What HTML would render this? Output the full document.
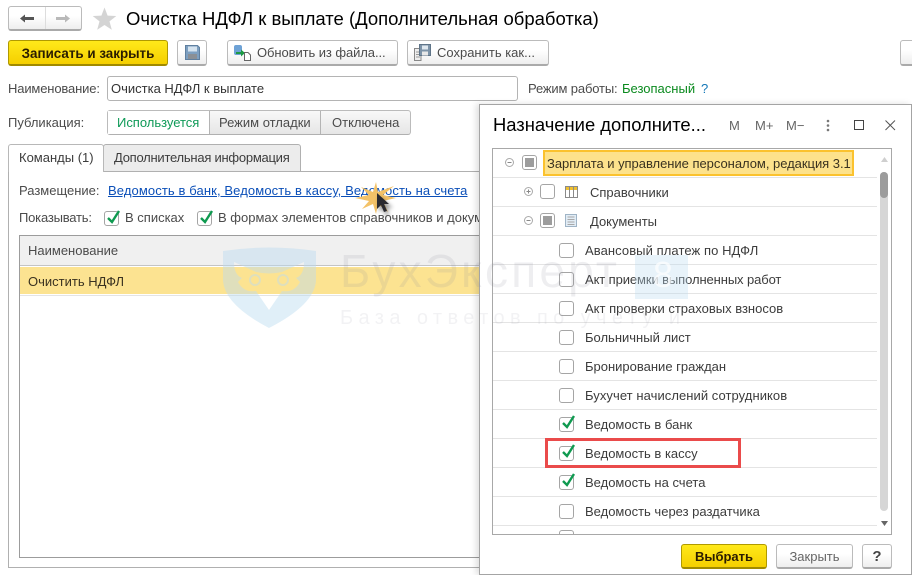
<!DOCTYPE html>
<html><head><meta charset="utf-8">
<style>
html,body{margin:0;padding:0;background:#fff}
#p{position:relative;width:912px;height:575px;overflow:hidden;background:#fff;font:13px/16px "Liberation Sans",sans-serif;color:#4b4b4b}
#p div,#p svg{position:absolute}
.t{white-space:nowrap}
.btn{box-sizing:border-box;border:1px solid #bbb;border-bottom:2px solid #aaa;border-radius:3px;background:linear-gradient(#fff 40%,#eee)}
.y{box-sizing:border-box;border:1px solid #b09a00;border-bottom:2px solid #a08a00;border-radius:3px;background:linear-gradient(#ffe91a,#f5cf00);color:#2a1c00;font-weight:bold;text-align:center;white-space:nowrap}
.cb{box-sizing:border-box;width:15px;height:15px;border:1px solid #a5a5a5;border-radius:3px;background:#fff}
.sep{left:0;width:384px;height:1px;background:#e4e4e4}
.tx{color:#3c3c3c}
</style></head><body><div id="p">

<!-- nav -->
<div class="btn" style="left:8px;top:6px;width:74px;height:25px"></div>
<div style="left:45px;top:7px;width:1px;height:22px;background:#ddd"></div>
<svg style="left:19px;top:13px" width="16" height="11"><path d="M1 5.500L6 1.500V4H15V7H6V9.500Z" fill="#555"/></svg>
<svg style="left:55px;top:13px" width="16" height="11"><path d="M15 5.500L10 1.500V4H1V7H10V9.500Z" fill="#b9b9b9"/></svg>
<svg style="left:92px;top:7px" width="25" height="23"><path d="M12.500 0.500L15.600 8.600L24.300 9L17.500 14.400L19.800 22.800L12.500 18L5.200 22.800L7.500 14.400L0.700 9L9.400 8.600Z" fill="#d4d4d4"/></svg>
<div class="t" style="left:126px;top:8px;font-size:18.500px;line-height:22px;color:#000">Очистка НДФЛ к выплате (Дополнительная обработка)</div>

<!-- toolbar -->
<div class="y" style="left:8px;top:40px;width:160px;height:26px;font-size:13.400px;line-height:25px">Записать и закрыть</div>
<div class="btn" style="left:177px;top:40px;width:30px;height:26px"></div>
<svg style="left:185px;top:45px" width="15" height="15"><path d="M.5.5H12.500L14.500 2.500V14.500H.5Z" fill="#7d9fc0" stroke="#5f7f9f"/><rect x="3" y="1.500" width="9" height="5" fill="#d5e3ef"/><rect x="3" y="9" width="9" height="5" fill="#8a8f95"/></svg>
<div class="btn" style="left:227px;top:40px;width:171px;height:26px"></div>
<svg style="left:234px;top:44px" width="18" height="17"><rect x="0" y="1" width="8" height="10" rx="2" fill="#6ea2d6"/><path d="M2 8H7V5.500L11 9 7 12.500V10H2Z" fill="#1e9a45"/><path d="M10.500 8.500H14L16.500 11V16.500H10.500Z" fill="#fff" stroke="#666"/></svg>
<div class="t" style="left:257px;top:45px;letter-spacing:-.08px">Обновить из файла...</div>
<div class="btn" style="left:407px;top:40px;width:142px;height:26px"></div>
<svg style="left:414px;top:44px" width="18" height="17"><path d="M.5 4.500H7V16.500H.5Z" fill="#eee" stroke="#888"/><path d="M2 8H6M2 10.500H6M2 13H6" stroke="#999"/><path d="M5.500.5H16.500V11.500H5.500Z" fill="#7d93a8" stroke="#5f7488"/><rect x="8" y="1.500" width="6" height="4" fill="#dfe7ee"/><rect x="8" y="7.500" width="6" height="4" fill="#e8e8e8"/></svg>
<div class="t" style="left:437px;top:45px">Сохранить как...</div>
<div class="btn" style="left:900px;top:40px;width:30px;height:26px"></div>

<!-- fields -->
<div class="t" style="left:8px;top:81px;letter-spacing:-.15px">Наименование:</div>
<div style="box-sizing:border-box;left:107px;top:76px;width:411px;height:25px;border:1px solid #b4b4b4;border-radius:3px"></div>
<div class="t" style="left:111px;top:81px;color:#333">Очистка НДФЛ к выплате</div>
<div class="t" style="left:528px;top:81px;letter-spacing:-.15px">Режим работы:</div>
<div class="t" style="left:622px;top:81px;color:#0a8a1e">Безопасный</div>
<div class="t" style="left:701px;top:81px;color:#1478b8">?</div>

<div class="t" style="left:8px;top:115px">Публикация:</div>
<div class="btn" style="left:107px;top:110px;width:304px;height:25px;border-bottom:1px solid #b0b0b0;background:linear-gradient(#f8f8f8,#e6e6e6)"></div>
<div style="left:108px;top:111px;width:101px;height:23px;background:#fff"></div>
<div style="left:209px;top:111px;width:1px;height:23px;background:#b4b4b4"></div>
<div style="left:320px;top:111px;width:1px;height:23px;background:#b4b4b4"></div>
<div class="t" style="left:117px;top:115px;color:#0f9a58;letter-spacing:-.02px">Используется</div>
<div class="t" style="left:219px;top:115px">Режим отладки</div>
<div class="t" style="left:332px;top:115px">Отключена</div>

<!-- tabs -->
<div style="box-sizing:border-box;left:8px;top:171px;width:480px;height:397px;border:1px solid #b0b0b0"></div>
<div style="box-sizing:border-box;left:103px;top:144px;width:198px;height:28px;border:1px solid #b0b0b0;border-radius:3px 3px 0 0;background:#ececec"></div>
<div style="box-sizing:border-box;left:8px;top:144px;width:96px;height:28px;border:1px solid #b8b8b8;border-bottom:none;border-radius:3px 3px 0 0;background:#fff"></div>
<div class="t" style="left:19px;top:150px;color:#3c3c3c">Команды (1)</div>
<div class="t" style="left:114px;top:150px;color:#3c3c3c;letter-spacing:-.25px">Дополнительная информация</div>

<div class="t" style="left:19px;top:183px">Размещение:</div>
<div class="t" style="left:108px;top:183px;color:#0b4fb8;text-decoration:underline;letter-spacing:.11px">Ведомость в банк, Ведомость в кассу, Ведомость на счета</div>
<div class="t" style="left:19px;top:210px;letter-spacing:-.2px">Показывать:</div>
<div class="cb" style="left:104px;top:211px"></div>
<svg style="left:105px;top:209px" width="16" height="15"><path d="M3 9L7 13L14 2" fill="none" stroke="#0f9a50" stroke-width="2.400"/></svg>
<div class="t" style="left:125px;top:210px">В списках</div>
<div class="cb" style="left:197px;top:211px"></div>
<svg style="left:198px;top:209px" width="16" height="15"><path d="M3 9L7 13L14 2" fill="none" stroke="#0f9a50" stroke-width="2.400"/></svg>
<div style="left:218px;top:210px;width:262px;height:16px;overflow:hidden"><span class="t">В формах элементов справочников и документов</span></div>

<!-- table -->
<div style="box-sizing:border-box;left:19px;top:235px;width:480px;height:323px;border:1px solid #9c9c9c"></div>
<div style="left:20px;top:236px;width:460px;height:29px;background:#f0f0f0"></div>
<div style="left:20px;top:265px;width:460px;height:1px;background:#c4c4c4"></div>
<div class="t" style="left:28px;top:243px">Наименование</div>
<div style="left:20px;top:267px;width:460px;height:27px;background:#fce391"></div>
<div style="left:20px;top:295px;width:460px;height:1px;background:#e4e4e4"></div>
<div class="t" style="left:28px;top:274px;color:#3a3220">Очистить НДФЛ</div>

<!-- cursor -->
<svg style="left:352px;top:176px" width="48" height="42">
<defs><filter id="b" x="-50%" y="-50%" width="200%" height="200%"><feGaussianBlur stdDeviation="2"/></filter></defs>
<path d="M24 6L26 16 42 10 31 19 44 22 31 25 36 36 26 28 24 38 21 28 10 33 17 25 3 22 17 19 9 11 21 16Z" fill="#f3c268"/>
<path d="M27 20V36L31 33 34 40 37 39 35 32 41 32Z" fill="#000" opacity=".4" filter="url(#b)"/>
<path d="M25 17V33L29 29 32 36 35 35 32 28 37 28Z" fill="#2a2a30"/>
</svg>

<!-- dialog -->
<div style="box-sizing:border-box;left:479px;top:104px;width:433px;height:471px;background:#fff;border:1px solid #a4a4a4;box-shadow:-3px 0 6px rgba(0,0,0,.13)"></div>
<div class="t" style="left:493px;top:114px;font-size:18.400px;line-height:22px;color:#000">Назначение дополните...</div>
<div class="t" style="left:729px;top:118px;color:#666">M</div>
<div class="t" style="left:755px;top:118px;color:#666">M+</div>
<div class="t" style="left:786px;top:118px;color:#666">M−</div>
<svg style="left:824px;top:119px" width="8" height="13"><circle cx="4" cy="2" r="1.300" fill="#777"/><circle cx="4" cy="6.500" r="1.300" fill="#777"/><circle cx="4" cy="11" r="1.300" fill="#777"/></svg>
<svg style="left:854px;top:120px" width="11" height="11"><rect x=".5" y=".5" width="9" height="9" fill="none" stroke="#444"/></svg>
<svg style="left:885px;top:120px" width="11" height="11"><path d="M.5.5L10 10M10 .5L.5 10" stroke="#555" fill="none"/></svg>

<!-- tree -->
<div style="box-sizing:border-box;left:492px;top:148px;width:400px;height:387px;border:1px solid #a8a8a8;overflow:hidden">
 <div class="sep" style="top:28px"></div>
 <div class="sep" style="top:57px"></div>
 <div class="sep" style="top:86px"></div>
 <div class="sep" style="top:115px"></div>
 <div class="sep" style="top:144px"></div>
 <div class="sep" style="top:173px"></div>
 <div class="sep" style="top:202px"></div>
 <div class="sep" style="top:231px"></div>
 <div class="sep" style="top:260px"></div>
 <div class="sep" style="top:289px"></div>
 <div class="sep" style="top:318px"></div>
 <div class="sep" style="top:347px"></div>
 <div class="sep" style="top:376px"></div>
 <div class="cb" style="left:66px;top:381px"></div>
</div>

<svg style="left:504px;top:157px" width="40" height="75">
<g fill="#fff" stroke="#aaa"><circle cx="5.500" cy="5.500" r="4"/><circle cx="24.500" cy="34.500" r="4"/><circle cx="24.500" cy="63.500" r="4"/></g>
<path d="M3.500 5.500H7.500M22.500 63.500H26.500M22.500 34.500H26.500M24.500 32.500V36.500" stroke="#888"/>
</svg>
<div class="cb" style="left:522px;top:155px"></div><div style="left:525px;top:158px;width:9px;height:9px;background:#9d9d9d"></div>
<div style="box-sizing:border-box;left:543px;top:150px;width:311px;height:26px;background:#fde28c;border:2px solid #fbc22e"></div>
<div class="t" style="left:547px;top:156px;color:#3a3220;letter-spacing:-.03px">Зарплата и управление персоналом, редакция 3.1</div>

<div class="cb" style="left:540px;top:184px"></div>
<svg style="left:565px;top:186px" width="14" height="13"><rect x=".5" y=".5" width="12" height="11" fill="#fff" stroke="#8a8a8a"/><rect x="1" y="1" width="11" height="3" fill="#f0c030"/><path d="M4.500 .5V11.500M8.500 .5V11.500" stroke="#8a8a8a"/></svg>
<div class="t tx" style="left:590px;top:185px">Справочники</div>

<div class="cb" style="left:540px;top:213px"></div><div style="left:543px;top:216px;width:9px;height:9px;background:#9d9d9d"></div>
<svg style="left:565px;top:214px" width="13" height="14"><rect x=".5" y=".5" width="11" height="12" fill="#e2edf6" stroke="#9fb4c6"/><path d="M2.500 3H9.500M2.500 5.500H9.500M2.500 8H9.500M2.500 10.500H9.500" stroke="#a8a8a8"/></svg>
<div class="t tx" style="left:590px;top:214px">Документы</div>

<div class="cb" style="left:559px;top:243px"></div><div class="t tx" style="left:585px;top:243px;letter-spacing:.08px">Авансовый платеж по НДФЛ</div>
<div class="cb" style="left:559px;top:272px"></div><div class="t tx" style="left:585px;top:272px;letter-spacing:-.1px">Акт приемки выполненных работ</div>
<div class="cb" style="left:559px;top:301px"></div><div class="t tx" style="left:585px;top:301px">Акт проверки страховых взносов</div>
<div class="cb" style="left:559px;top:330px"></div><div class="t tx" style="left:585px;top:330px">Больничный лист</div>
<div class="cb" style="left:559px;top:359px"></div><div class="t tx" style="left:585px;top:359px">Бронирование граждан</div>
<div class="cb" style="left:559px;top:388px"></div><div class="t tx" style="left:585px;top:388px;letter-spacing:.06px">Бухучет начислений сотрудников</div>
<div class="cb" style="left:559px;top:417px"></div><div class="t tx" style="left:585px;top:417px">Ведомость в банк</div>
<div class="cb" style="left:559px;top:446px"></div><div class="t tx" style="left:585px;top:446px">Ведомость в кассу</div>
<div class="cb" style="left:559px;top:475px"></div><div class="t tx" style="left:585px;top:475px">Ведомость на счета</div>
<div class="cb" style="left:559px;top:504px"></div><div class="t tx" style="left:585px;top:504px">Ведомость через раздатчика</div>
<svg style="left:560px;top:414px" width="16" height="15"><path d="M3 9L7 13L14 2" fill="none" stroke="#0f9a50" stroke-width="2.400"/></svg>
<svg style="left:560px;top:443px" width="16" height="15"><path d="M3 9L7 13L14 2" fill="none" stroke="#0f9a50" stroke-width="2.400"/></svg>
<svg style="left:560px;top:472px" width="16" height="15"><path d="M3 9L7 13L14 2" fill="none" stroke="#0f9a50" stroke-width="2.400"/></svg>

<div style="box-sizing:border-box;left:545px;top:438px;width:196px;height:30px;border:3px solid #ea4b4b"></div>

<!-- scrollbar -->
<div style="left:880px;top:172px;width:8px;height:339px;background:#d6d6d6;border-radius:4px"></div>
<div style="left:880px;top:172px;width:8px;height:26px;background:#9c9c9c;border-radius:4px"></div>
<svg style="left:881px;top:157px" width="7" height="5"><path d="M3.500 0L7 5H0Z" fill="#cfcfcf"/></svg>
<svg style="left:881px;top:521px" width="7" height="5"><path d="M3.500 5L7 0H0Z" fill="#666"/></svg>

<!-- footer -->
<div class="y" style="left:681px;top:544px;width:86px;height:25px;font-size:13px;line-height:24px">Выбрать</div>
<div class="btn" style="left:776px;top:544px;width:77px;height:25px;text-align:center;line-height:24px;font-size:13px;color:#666">Закрыть</div>
<div class="btn" style="left:862px;top:544px;width:30px;height:25px;text-align:center;line-height:23px;font-size:15px;font-weight:bold;color:#444">?</div>

<!-- watermark (over everything) -->
<svg style="left:222px;top:245px;pointer-events:none" width="480" height="90">
<defs><mask id="o"><rect width="100" height="90" fill="#fff"/>
<path d="M12 17L34 27Q47 30 60 27L82 17Q82 30 74 33L78 37Q72 48 60 46L47 65L34 46Q22 48 16 37L20 33Q12 30 12 17Z" fill="#000"/>
<circle cx="33" cy="35" r="5" fill="none" stroke="#fff" stroke-width="2"/><circle cx="61" cy="35" r="5" fill="none" stroke="#fff" stroke-width="2"/>
</mask></defs>
<path d="M1 6Q47 -1 94 6V36Q92 60 47 83Q3 60 1 36Z" fill="#bcdcf0" opacity=".45" mask="url(#o)"/>
<text x="118" y="42" font-family="Liberation Sans" font-size="46" fill="#8a8a9a" opacity=".14" textLength="277">БухЭксперт</text>
<text x="118" y="79" font-family="Liberation Sans" font-size="20" fill="#8a8a9a" opacity=".1" textLength="340">База ответов по учету и</text>
<rect x="413" y="10" width="53" height="44" fill="#bcdcf0" opacity=".35"/>
<text x="431" y="42" font-family="Liberation Sans" font-size="36" fill="#fff" opacity=".7">8</text>
</svg>

</div></body></html>
